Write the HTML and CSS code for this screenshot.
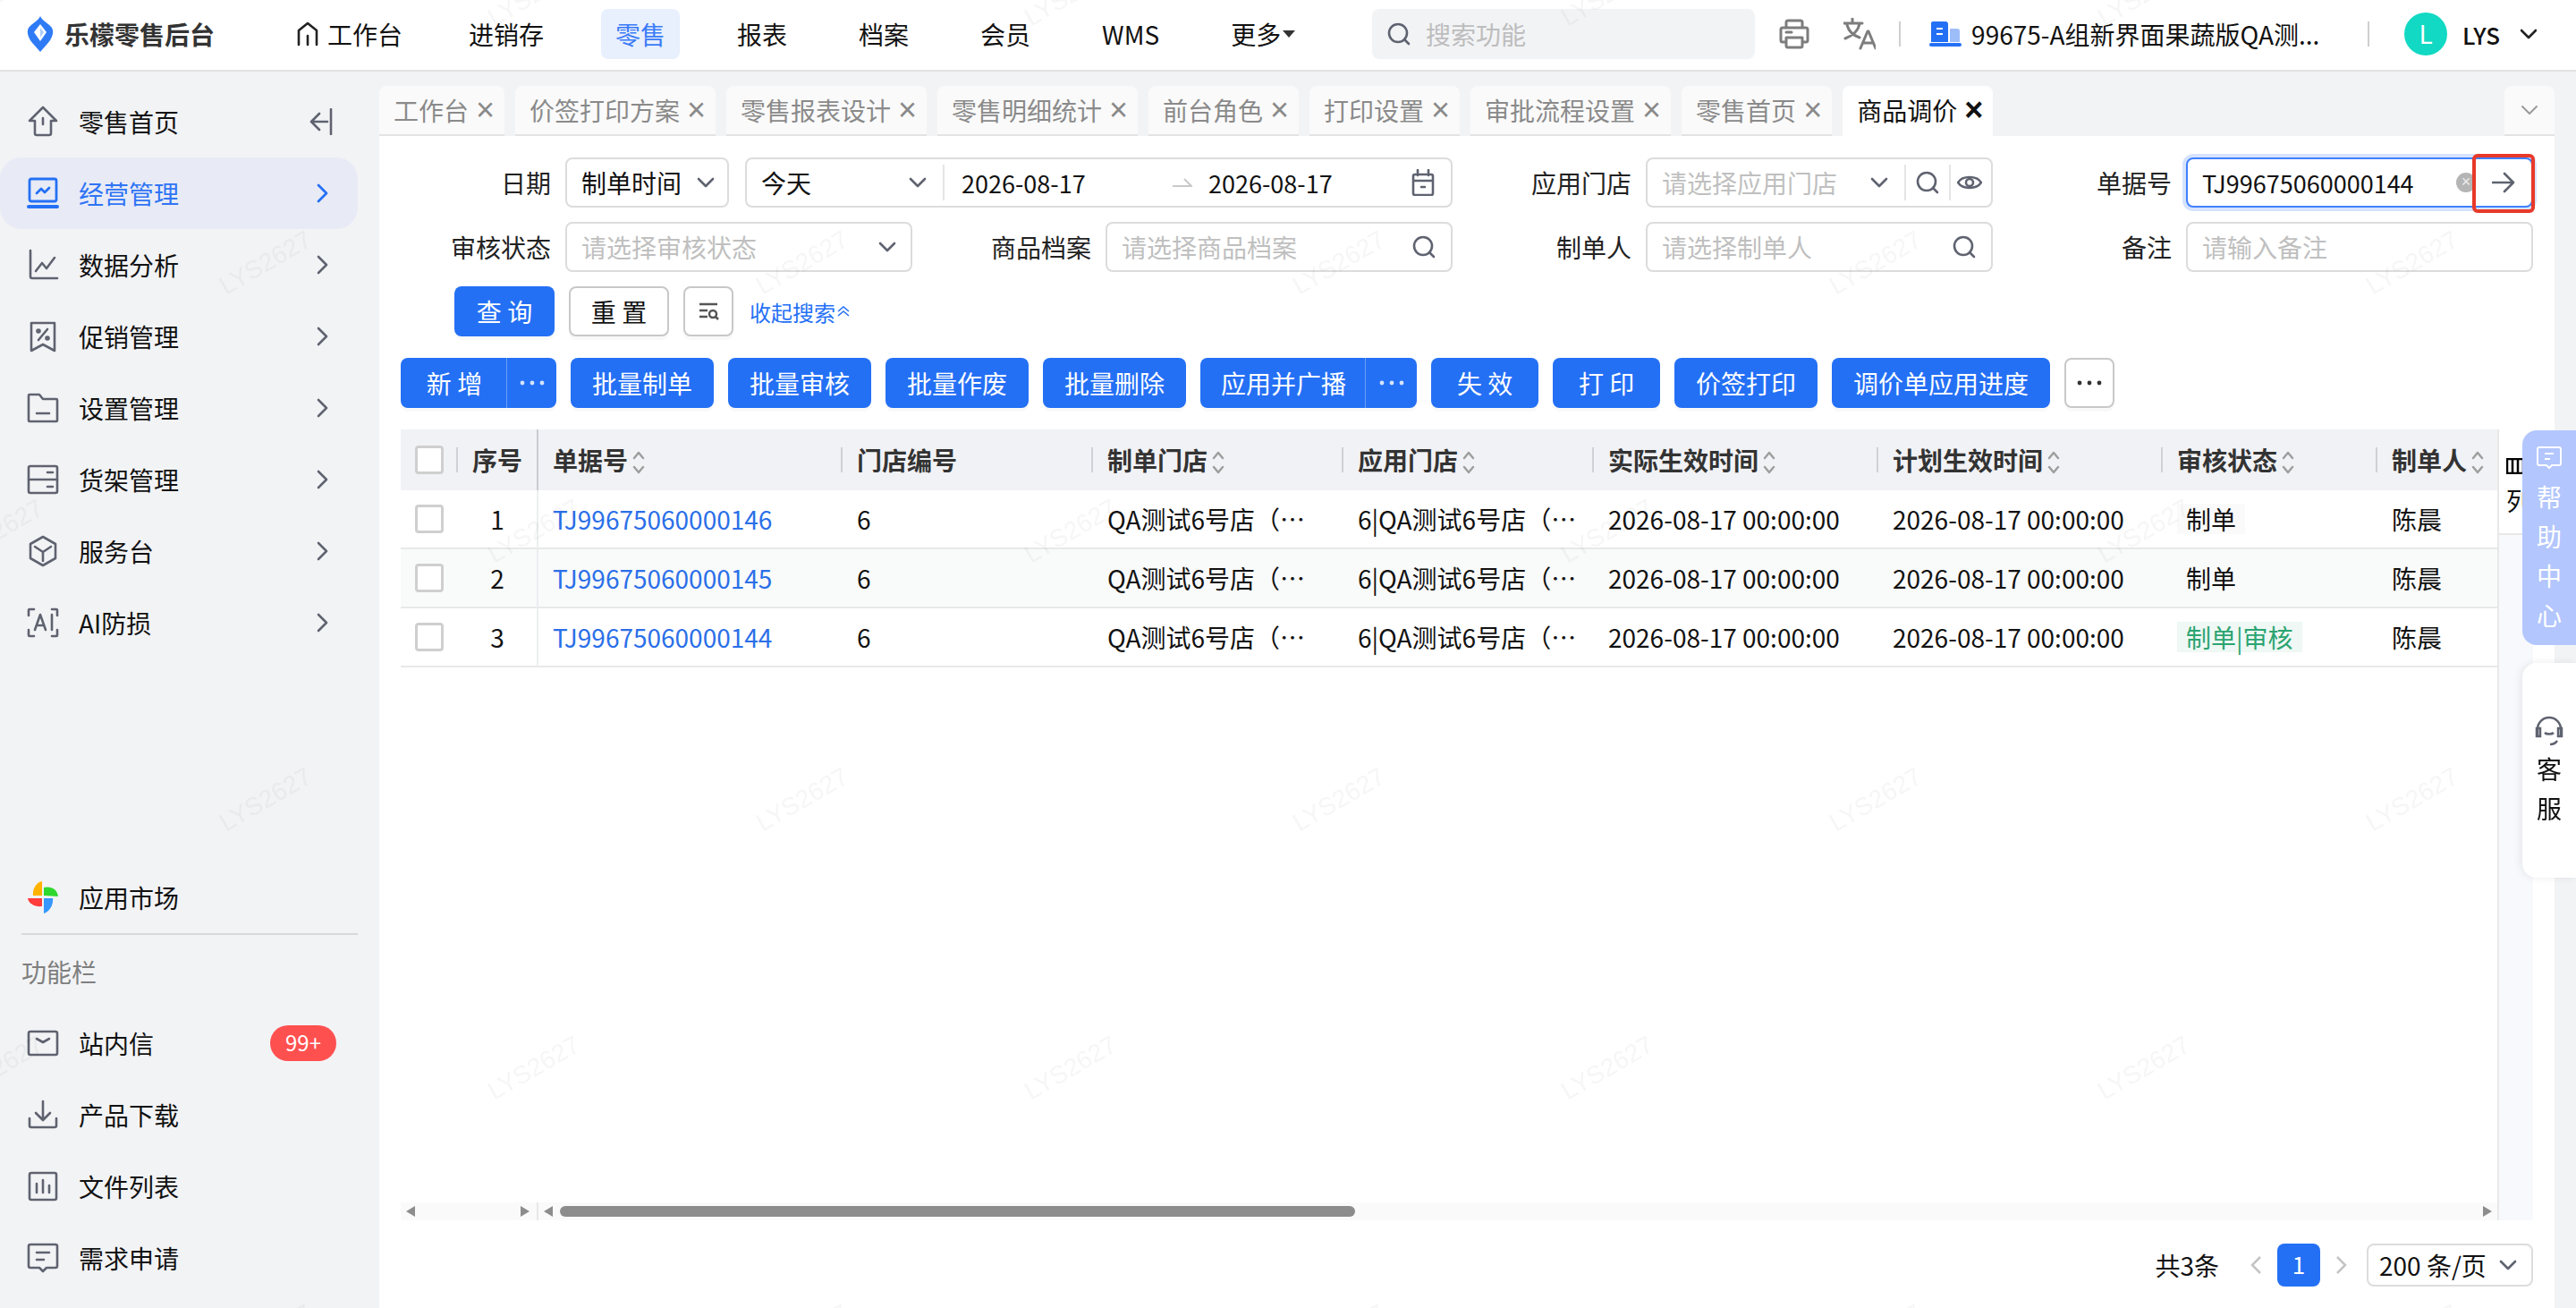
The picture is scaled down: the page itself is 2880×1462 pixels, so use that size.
FILE: index.html
```html
<!DOCTYPE html>
<html lang="zh">
<head>
<meta charset="utf-8">
<title>商品调价</title>
<link rel="stylesheet" href="styles.css">
</head>
<body>
<div class="app">
  <header class="topbar">
    <svg class="logo" viewBox="0 0 30 40"><path fill="#2f7bf6" d="M15 0C17 5 24 8 28 13 31 18 28 26 22 32L15 40 8 32C2 26-1 18 2 13 6 8 13 5 15 0z"/><path fill="#fff" d="M15 9l7 9-7 10-7-10z"/><path fill="#a9cdff" d="M15 13l4 5-4 6z"/></svg>
    <span class="brand">乐檬零售后台</span>
    <nav class="nav">
      <a class="nav-item nav-first"><svg class="nav-home" viewBox="0 0 24 28"><path d="M2 26V10L12 2l10 8v16M12 16v10" class="st-dark"/></svg>工作台</a>
      <a class="nav-item">进销存</a>
      <a class="nav-item nav-active">零售</a>
      <a class="nav-item">报表</a>
      <a class="nav-item">档案</a>
      <a class="nav-item">会员</a>
      <a class="nav-item">WMS</a>
      <a class="nav-item">更多<i class="tri-down"></i></a>
    </nav>
    <div class="top-right">
      <div class="top-search"><svg class="ic28" viewBox="0 0 28 28"><circle cx="13" cy="13" r="10" class="st"/><path d="M20 20l5 5" class="st"/></svg><span>搜索功能</span></div>
      <svg class="ic-print" viewBox="0 0 36 36"><path class="st-grey" d="M9 11V5a2 2 0 0 1 2-2h14a2 2 0 0 1 2 2v6M9 27H5a2 2 0 0 1-2-2V13a2 2 0 0 1 2-2h26a2 2 0 0 1 2 2v12a2 2 0 0 1-2 2h-4M9 22h18v9a2 2 0 0 1-2 2H11a2 2 0 0 1-2-2zM9 16h6"/></svg>
      <svg class="ic-trans" viewBox="0 0 36 36"><path class="st-grey" d="M0 6h21M10 1v5M18 6c-1 8-8 14-16 17M4 8c2 7 8 12 14 14M19 34l8-19h1l8 19M22 28h11"/></svg>
      <i class="vbar vbar-a"></i>
      <svg class="ic-org" viewBox="0 0 36 28"><path fill="#2470f5" d="M2 2a2 2 0 0 1 2-2h14a3 3 0 0 1 3 3v20H2z"/><path fill="#9dbdf8" d="M23 8h8a3 3 0 0 1 3 3v12H23z"/><rect x="0" y="24" width="36" height="4" rx="2" fill="#2470f5"/><path d="M8 8h7M8 14h7" stroke="#fff" stroke-width="2" fill="none"/></svg>
      <span class="org-name">99675-A组新界面果蔬版QA测...</span>
      <i class="vbar vbar-b"></i>
      <span class="avatar">L</span>
      <span class="user">LYS</span>
      <svg class="ic-userchev" viewBox="0 0 18 12"><path d="M1 2l8 8 8-8" class="st-dark"/></svg>
    </div>
  </header>

  <div class="body">
    <aside class="side">
      <a class="side-item"><svg class="side-ic" viewBox="0 0 36 36"><path class="st" d="M3 17L18 2l15 15h-6v14a2 2 0 0 1-2 2H11a2 2 0 0 1-2-2V17zM18 14v7"/></svg><span>零售首页</span><svg class="collapse" viewBox="0 0 26 30"><path class="st" d="M24 1v28M20 15H3M11 6l-9 9 9 9"/></svg></a>
      <a class="side-item side-active"><svg class="side-ic" viewBox="0 0 36 36"><path class="st-blue" d="M3 4a2 2 0 0 1 2-2h26a2 2 0 0 1 2 2v21a2 2 0 0 1-2 2H5a2 2 0 0 1-2-2z"/><path class="st-blue" d="M11 18l5-5 4 4 5-5"/><path d="M2 33h32" stroke="#2470f5" stroke-width="4" stroke-linecap="round"/></svg><span>经营管理</span><svg class="chev" viewBox="0 0 14 22"><path class="st-blue" d="M2 2l9 9-9 9"/></svg></a>
      <a class="side-item"><svg class="side-ic" viewBox="0 0 36 36"><path class="st" d="M4 2v29a2 2 0 0 0 2 2h28M10 25l7-9 5 6 9-12"/></svg><span>数据分析</span><svg class="chev" viewBox="0 0 14 22"><path class="st" d="M2 2l9 9-9 9"/></svg></a>
      <a class="side-item"><svg class="side-ic" viewBox="0 0 36 36"><path class="st" d="M5 3h26v31l-13-7-13 7zM23 10L13 22"/><circle cx="13" cy="12" r="1.500" class="st"/><circle cx="23" cy="20" r="1.500" class="st"/></svg><span>促销管理</span><svg class="chev" viewBox="0 0 14 22"><path class="st" d="M2 2l9 9-9 9"/></svg></a>
      <a class="side-item"><svg class="side-ic" viewBox="0 0 36 36"><path class="st" d="M2 4a1 1 0 0 1 1-1h11l4 5h15a1 1 0 0 1 1 1v23a1 1 0 0 1-1 1H3a1 1 0 0 1-1-1zM11 24h14"/></svg><span>设置管理</span><svg class="chev" viewBox="0 0 14 22"><path class="st" d="M2 2l9 9-9 9"/></svg></a>
      <a class="side-item"><svg class="side-ic" viewBox="0 0 36 36"><rect x="2" y="3" width="32" height="30" rx="2" class="st"/><path class="st" d="M2 18h32M23 10h6M23 26h6"/></svg><span>货架管理</span><svg class="chev" viewBox="0 0 14 22"><path class="st" d="M2 2l9 9-9 9"/></svg></a>
      <a class="side-item"><svg class="side-ic" viewBox="0 0 36 36"><path class="st" d="M18 2l14 8v16l-14 8-14-8V10zM9 13l9 6 9-6M18 19v10"/></svg><span>服务台</span><svg class="chev" viewBox="0 0 14 22"><path class="st" d="M2 2l9 9-9 9"/></svg></a>
      <a class="side-item"><svg class="side-ic" viewBox="0 0 36 36"><path class="st" d="M2 10V4a1 1 0 0 1 1-1h5M28 3h5a1 1 0 0 1 1 1v6M2 26v6a1 1 0 0 0 1 1h5M34 26v6a1 1 0 0 1-1 1h-5M9 26l6-17 6 17M11 21h8M28 9v17"/></svg><span>AI防损</span><svg class="chev" viewBox="0 0 14 22"><path class="st" d="M2 2l9 9-9 9"/></svg></a>

      <a class="side-item side-market"><svg class="side-ic" viewBox="0 0 36 36"><path fill="#ffb300" d="M17 16H7C6 8 11 1 17 0z"/><path fill="#2fd82f" d="M19 16V7c8-2 15 2 16 10z"/><path fill="#ff3d3d" d="M17 19v9C9 29 2 25 1 19z"/><path fill="#3597ff" d="M19 19h10c1 8-4 15-10 17z"/></svg><span>应用市场</span></a>
      <div class="side-rule"></div>
      <div class="side-title">功能栏</div>
      <a class="side-item"><svg class="side-ic" viewBox="0 0 36 36"><rect x="2" y="5" width="32" height="26" rx="2" class="st"/><path class="st" d="M11 13l7 4 7-4"/></svg><span>站内信</span><b class="badge">99+</b></a>
      <a class="side-item"><svg class="side-ic" viewBox="0 0 36 36"><path class="st" d="M3 22v8a2 2 0 0 0 2 2h26a2 2 0 0 0 2-2v-8M18 3v20M10 16l8 8 8-8"/></svg><span>产品下载</span></a>
      <a class="side-item"><svg class="side-ic" viewBox="0 0 36 36"><rect x="3" y="3" width="30" height="30" rx="2" class="st"/><path class="st" d="M11 15v10M18 11v14M25 17v8"/></svg><span>文件列表</span></a>
      <a class="side-item"><svg class="side-ic" viewBox="0 0 36 36"><path class="st" d="M2 5a2 2 0 0 1 2-2h28a2 2 0 0 1 2 2v22a2 2 0 0 1-2 2h-10l-4 4-4-4H4a2 2 0 0 1-2-2zM11 12h14M11 20h8"/></svg><span>需求申请</span></a>
    </aside>

    <main class="main">
      <div class="tabs">
        <a class="tab">工作台<i class="x">×</i></a>
        <a class="tab">价签打印方案<i class="x">×</i></a>
        <a class="tab">零售报表设计<i class="x">×</i></a>
        <a class="tab">零售明细统计<i class="x">×</i></a>
        <a class="tab">前台角色<i class="x">×</i></a>
        <a class="tab">打印设置<i class="x">×</i></a>
        <a class="tab">审批流程设置<i class="x">×</i></a>
        <a class="tab">零售首页<i class="x">×</i></a>
        <a class="tab tab-active">商品调价<i class="x">×</i></a>
        <a class="tab tab-more"><svg class="sel-chev" viewBox="0 0 20 12"><path class="st-light" d="M2 2l8 8 8-8"/></svg></a>
      </div>

      <section class="panel">
        <div class="form">
          <div class="field field-wide">
            <label class="lbl">日期</label>
            <div class="ctl ctl-type"><span>制单时间</span><svg class="sel-chev" viewBox="0 0 20 12"><path class="st" d="M2 2l8 8 8-8"/></svg></div>
            <div class="ctl ctl-range">
              <div class="range-sel"><span>今天</span><svg class="sel-chev" viewBox="0 0 20 12"><path class="st" d="M2 2l8 8 8-8"/></svg></div>
              <span class="range-a">2026-08-17</span>
              <svg class="range-arrow" viewBox="0 0 22 12"><path d="M0 10h21l-8-8" stroke="#c9c9c9" stroke-width="2" fill="none"/></svg>
              <span class="range-b">2026-08-17</span>
              <svg class="ic-cal" viewBox="0 0 26 30"><path class="st" d="M2 8a2 2 0 0 1 2-2h18a2 2 0 0 1 2 2v19a2 2 0 0 1-2 2H4a2 2 0 0 1-2-2zM7 1v6M19 1v6M2 13h22M11 20h4"/></svg>
            </div>
          </div>
          <div class="field">
            <label class="lbl">应用门店</label>
            <div class="ctl ctl-store">
              <span class="ph">请选择应用门店</span>
              <svg class="sel-chev store-chev" viewBox="0 0 20 12"><path class="st" d="M2 2l8 8 8-8"/></svg>
              <i class="ctl-div"></i>
              <svg class="ic-search" viewBox="0 0 28 28"><circle cx="13" cy="13" r="10" class="st"/><path d="M20 20l5 5" class="st"/></svg>
              <i class="ctl-div"></i>
              <svg class="ic-eye" viewBox="0 0 28 28"><path class="st" d="M1 14c5-8 21-8 26 0-5 8-21 8-26 0z"/><circle cx="14" cy="14" r="4" class="st"/></svg>
            </div>
          </div>
          <div class="field field-focus">
            <label class="lbl">单据号</label>
            <div class="ctl ctl-focus">
              <span>TJ99675060000144</span>
              <i class="clear">×</i>
              <svg class="ic-arrow" viewBox="0 0 26 24"><path class="st" d="M1 12h23M14 2l10 10-10 10"/></svg>
            </div>
            <i class="redbox"></i>
          </div>

          <div class="field">
            <label class="lbl">审核状态</label>
            <div class="ctl ctl-grow"><span class="ph">请选择审核状态</span><svg class="sel-chev" viewBox="0 0 20 12"><path class="st" d="M2 2l8 8 8-8"/></svg></div>
          </div>
          <div class="field">
            <label class="lbl">商品档案</label>
            <div class="ctl ctl-grow"><span class="ph">请选择商品档案</span><svg class="ic-search" viewBox="0 0 28 28"><circle cx="13" cy="13" r="10" class="st"/><path d="M20 20l5 5" class="st"/></svg></div>
          </div>
          <div class="field">
            <label class="lbl">制单人</label>
            <div class="ctl ctl-grow"><span class="ph">请选择制单人</span><svg class="ic-search" viewBox="0 0 28 28"><circle cx="13" cy="13" r="10" class="st"/><path d="M20 20l5 5" class="st"/></svg></div>
          </div>
          <div class="field">
            <label class="lbl">备注</label>
            <div class="ctl ctl-grow"><span class="ph">请输入备注</span></div>
          </div>
        </div>

        <div class="query">
          <a class="btn btn-q">查 询</a>
          <a class="btn btn-line">重 置</a>
          <a class="btn btn-line btn-ic"><svg viewBox="0 0 24 24"><path d="M2 4h20M2 11h9M2 18h9" stroke="#555" stroke-width="2.500" fill="none"/><circle cx="17" cy="15" r="4" stroke="#555" stroke-width="2.500" fill="none"/><path d="M20 18l3 3" stroke="#555" stroke-width="2.500"/></svg></a>
          <a class="fold">收起搜索<svg viewBox="0 0 14 12"><path d="M1 6l6-5 6 5M1 11l6-5 6 5" stroke="#2470f5" stroke-width="1.600" fill="none"/></svg></a>
        </div>

        <div class="actions">
          <div class="split"><a class="btn sp-a">新 增</a><a class="btn sp-b"><svg class="dots" viewBox="0 0 28 6"><circle cx="3" cy="3" r="2.400"/><circle cx="14" cy="3" r="2.400"/><circle cx="25" cy="3" r="2.400"/></svg></a></div>
          <a class="btn">批量制单</a>
          <a class="btn">批量审核</a>
          <a class="btn">批量作废</a>
          <a class="btn">批量删除</a>
          <div class="split"><a class="btn sp-c">应用并广播</a><a class="btn sp-b"><svg class="dots" viewBox="0 0 28 6"><circle cx="3" cy="3" r="2.400"/><circle cx="14" cy="3" r="2.400"/><circle cx="25" cy="3" r="2.400"/></svg></a></div>
          <a class="btn btn-2">失 效</a>
          <a class="btn btn-2">打 印</a>
          <a class="btn">价签打印</a>
          <a class="btn">调价单应用进度</a>
          <a class="btn btn-line btn-dots"><svg class="dots" viewBox="0 0 28 6"><circle cx="3" cy="3" r="2.400"/><circle cx="14" cy="3" r="2.400"/><circle cx="25" cy="3" r="2.400"/></svg></a>
        </div>

        <div class="tbl-wrap">
          <div class="tbl-col">
            <table class="tbl">
              <colgroup><col class="c-chk"><col class="c-seq"><col class="c-no"><col class="c-std"><col class="c-std"><col class="c-std"><col class="c-time"><col class="c-time"><col class="c-status"><col class="c-user"></colgroup>
              <thead>
                <tr>
                  <th class="t-chk"><i class="chk"></i></th>
                  <th class="t-seq">序号</th>
                  <th class="sep">单据号<svg class="sort" viewBox="0 0 14 28"><path d="M2 9l5-6 5 6M2 19l5 6 5-6" class="st-sort"/></svg></th>
                  <th class="sep">门店编号</th>
                  <th class="sep">制单门店<svg class="sort" viewBox="0 0 14 28"><path d="M2 9l5-6 5 6M2 19l5 6 5-6" class="st-sort"/></svg></th>
                  <th class="sep">应用门店<svg class="sort" viewBox="0 0 14 28"><path d="M2 9l5-6 5 6M2 19l5 6 5-6" class="st-sort"/></svg></th>
                  <th class="sep">实际生效时间<svg class="sort" viewBox="0 0 14 28"><path d="M2 9l5-6 5 6M2 19l5 6 5-6" class="st-sort"/></svg></th>
                  <th class="sep">计划生效时间<svg class="sort" viewBox="0 0 14 28"><path d="M2 9l5-6 5 6M2 19l5 6 5-6" class="st-sort"/></svg></th>
                  <th class="sep">审核状态<svg class="sort" viewBox="0 0 14 28"><path d="M2 9l5-6 5 6M2 19l5 6 5-6" class="st-sort"/></svg></th>
                  <th>制单人<svg class="sort" viewBox="0 0 14 28"><path d="M2 9l5-6 5 6M2 19l5 6 5-6" class="st-sort"/></svg></th>
                </tr>
              </thead>
              <tbody>
                <tr>
                  <td class="t-chk"><i class="chk"></i></td><td class="t-seq">1</td>
                  <td><a class="link">TJ99675060000146</a></td><td>6</td><td>QA测试6号店（…</td><td>6|QA测试6号店（…</td>
                  <td>2026-08-17 00:00:00</td><td>2026-08-17 00:00:00</td>
                  <td><span class="tag">制单</span></td><td>陈晨</td>
                </tr>
                <tr class="alt">
                  <td class="t-chk"><i class="chk"></i></td><td class="t-seq">2</td>
                  <td><a class="link">TJ99675060000145</a></td><td>6</td><td>QA测试6号店（…</td><td>6|QA测试6号店（…</td>
                  <td>2026-08-17 00:00:00</td><td>2026-08-17 00:00:00</td>
                  <td><span class="tag">制单</span></td><td>陈晨</td>
                </tr>
                <tr>
                  <td class="t-chk"><i class="chk"></i></td><td class="t-seq">3</td>
                  <td><a class="link">TJ99675060000144</a></td><td>6</td><td>QA测试6号店（…</td><td>6|QA测试6号店（…</td>
                  <td>2026-08-17 00:00:00</td><td>2026-08-17 00:00:00</td>
                  <td><span class="tag tag-green">制单|审核</span></td><td>陈晨</td>
                </tr>
              </tbody>
            </table>
            <div class="scroll">
              <div class="scroll-fixed"><i class="ar-l"></i><i class="ar-r"></i></div>
              <div class="scroll-main"><i class="ar-l"></i><i class="thumb"></i><i class="ar-r ar-end"></i></div>
            </div>
          </div>
          <div class="col-set">
            <div class="col-set-head"><svg viewBox="0 0 20 18"><path d="M1 1h18v16H1zM7 1v16M13 1v16" stroke="#000" stroke-width="2.500" fill="none"/></svg><span>列</span></div>
          </div>
        </div>

        <div class="pager">
          <span class="total">共3条</span>
          <svg class="pg-chev pg-prev" viewBox="0 0 14 22"><path d="M12 2l-9 9 9 9" stroke="#c4c4c4" stroke-width="2.500" fill="none"/></svg>
          <a class="pg-cur">1</a>
          <svg class="pg-chev pg-next" viewBox="0 0 14 22"><path d="M2 2l9 9-9 9" stroke="#c4c4c4" stroke-width="2.500" fill="none"/></svg>
          <div class="pg-size"><span>200 条/页</span><svg class="sel-chev" viewBox="0 0 20 12"><path class="st" d="M2 2l8 8 8-8"/></svg></div>
        </div>
      </section>
    </main>
  </div>
</div>

<aside class="float-help">
  <svg viewBox="0 0 30 26"><path d="M2 3a2 2 0 0 1 2-2h22a2 2 0 0 1 2 2v16a2 2 0 0 1-2 2h-8l-3 3-3-3H4a2 2 0 0 1-2-2zM10 8h10M10 14h6" stroke="#fff" stroke-width="2" fill="none"/></svg>
  <span>帮</span><span>助</span><span>中</span><span>心</span>
</aside>
<aside class="float-cs">
  <svg viewBox="0 0 32 34"><path d="M3 22V15a13 13 0 0 1 26 0v7M25 28c-2 3-5 4-8 4M2 14h4v9H2zM26 14h4v9h-4zM11 19c2 2 8 2 10 0" stroke="#5f6370" stroke-width="2.500" fill="none"/></svg>
  <span>客</span><span>服</span>
</aside>

<svg class="watermark" width="2880" height="1462" aria-hidden="true">
  <defs>
    <pattern id="wm" x="147" y="144" width="600" height="600" patternUnits="userSpaceOnUse">
      <text x="150" y="159" text-anchor="middle" transform="rotate(-30 150 150)" class="wm-text">LYS2627</text>
      <text x="450" y="459" text-anchor="middle" transform="rotate(-30 450 450)" class="wm-text">LYS2627</text>
    </pattern>
  </defs>
  <rect width="2880" height="1462" fill="url(#wm)"/>
</svg>
</body>
</html>
```

FILE: styles.css
```css
* { box-sizing: border-box; }
html, body { margin: 0; height: 100%; overflow: hidden; }
body {
  font-family: "Noto Sans CJK SC", "Noto Sans", sans-serif;
  font-size: 28px;
  color: #111;
  background: #f2f3f5;
}
i { font-style: normal; }
a { color: inherit; text-decoration: none; }

.st, .st-dark, .st-blue, .st-grey, .st-light, .st-sort { fill: none; stroke-linecap: round; stroke-linejoin: round; }
.st { stroke: #5f6370; stroke-width: 2.6; }
.st-dark { stroke: #222; stroke-width: 2.6; }
.st-blue { stroke: #2470f5; stroke-width: 2.8; }
.st-grey { stroke: #7d7d7d; stroke-width: 3; }
.st-light { stroke: #9a9a9a; stroke-width: 2; }
.st-sort { stroke: #9d9d9d; stroke-width: 2.4; }

.app { display: flex; flex-direction: column; height: 1462px; }

/* top bar */
.topbar {
  height: 80px; flex: none;
  display: flex; align-items: center;
  padding: 0 44px 2px 30px;
  background: #fff;
  border-bottom: 2px solid #e2e2e2;
}
.logo { width: 30px; height: 40px; flex: none; }
.brand { margin-left: 12px; font-weight: 700; color: #333; white-space: nowrap; }
.nav { display: flex; align-items: center; gap: 48px; margin-left: 76px; }
.nav-item { height: 56px; padding: 0 16px; display: flex; align-items: center; border-radius: 8px; white-space: nowrap; color: #111; }
.nav-first { margin-right: -6px; }
.nav-home { width: 24px; height: 28px; margin-right: 10px; }
.nav-active { background: #e8effd; color: #3a7bf7; }
.tri-down { width: 0; height: 0; margin-left: 2px; border: 7px solid transparent; border-top: 8px solid #333; border-bottom: 0; }
.top-right { margin-left: auto; display: flex; align-items: center; }
.top-search { width: 428px; height: 56px; border-radius: 8px; background: #f2f3f5; display: flex; align-items: center; padding-left: 16px; color: #bdbdbd; gap: 16px; }
.ic28 { width: 28px; height: 28px; }
.ic-print { width: 36px; height: 36px; margin-left: 26px; }
.ic-trans { width: 36px; height: 36px; margin-left: 37px; }
.vbar { width: 2px; height: 28px; background: #cfcfcf; }
.vbar-a { margin-left: 26px; }
.ic-org { width: 36px; height: 28px; margin-left: 32px; }
.org-name { width: 387px; margin-left: 11px; white-space: nowrap; }
.vbar-b { margin-left: 56px; }
.avatar { width: 48px; height: 48px; margin-left: 39px; border-radius: 50%; background: #12d9c3; color: #fff; text-align: center; line-height: 46px; }
.user { margin-left: 17px; font-size: 26px; font-weight: 500; }
.ic-userchev { width: 18px; height: 12px; margin-left: 23px; }

/* body */
.body { flex: 1; display: flex; min-height: 0; }
.side { width: 424px; flex: none; display: flex; flex-direction: column; padding: 16px 0 16px; }
.side-item { height: 80px; flex: none; width: 400px; display: flex; align-items: center; padding: 0 32px 0 30px; border-radius: 24px; }
.side-item > span { margin-left: 22px; white-space: nowrap; }
.side-ic { width: 36px; height: 36px; flex: none; }
.chev { width: 14px; height: 22px; margin-left: auto; }
.collapse { width: 26px; height: 30px; margin-left: auto; margin-right: -4px; }
.side-active { background: #e8ebf5; color: #2f74f5; }
.side-market { margin-top: auto; }
.side-rule { height: 2px; width: 376px; margin-left: 24px; background: #d9d9d9; flex: none; }
.side-title { height: 81px; flex: none; display: flex; align-items: center; padding-left: 24px; color: #7f7f7f; }
.badge { margin-left: auto; margin-right: -8px; width: 74px; height: 40px; border-radius: 20px; background: #ff5050; color: #fff; font-size: 24px; font-weight: 400; text-align: center; line-height: 38px; }

/* main */
.main { flex: 1; min-width: 0; display: flex; flex-direction: column; padding: 16px 24px 0 0; }
.tabs { display: flex; gap: 12px; height: 56px; flex: none; }
.tab { height: 56px; padding: 0 14px 0 16px; display: flex; align-items: center; background: #fafafa; border-bottom: 2px solid #e3e3e3; border-radius: 8px 8px 0 0; color: #8a8a8a; white-space: nowrap; }
.x { width: 16px; margin-left: 8px; margin-right: 2px; font-size: 36px; line-height: 28px; text-align: center; font-family: "Liberation Sans", sans-serif; }
.tab-active { background: #fff; border-bottom-color: #fff; color: #111; }
.tab-active .x { color: #111; font-weight: 700; }
.tab-more { margin-left: auto; width: 56px; padding: 0; justify-content: center; }

.panel { flex: 1; min-height: 0; background: #fff; padding: 24px 24px 0; display: flex; flex-direction: column; }

.form { display: grid; grid-template-columns: repeat(4, 572px); column-gap: 32px; row-gap: 16px; }
.field { display: flex; align-items: center; position: relative; }
.field-wide { grid-column: span 2; }
.lbl { width: 168px; margin-right: 16px; flex: none; text-align: right; white-space: nowrap; color: #222; }
.ctl { height: 56px; display: flex; align-items: center; border: 2px solid #dcdcdc; border-radius: 8px; padding: 0 16px; white-space: nowrap; background: #fff; }
.ctl-grow { flex: 1; justify-content: space-between; }
.ph { color: #bfbfbf; }
.sel-chev { width: 20px; height: 12px; flex: none; }
.ctl-type { width: 183px; justify-content: space-between; padding-right: 14px; }
.ctl-range { width: 791px; margin-left: 18px; }
.range-sel { width: 205px; flex: none; display: flex; align-items: center; justify-content: space-between; height: 40px; padding-right: 18px; border-right: 2px solid #e5e5e5; }
.range-a { margin-left: 19px; width: 236px; font-size: 27px; flex: none; }
.range-arrow { width: 22px; height: 12px; flex: none; }
.range-b { margin-left: 18px; font-size: 27px; }
.ic-cal { width: 26px; height: 30px; margin-left: auto; margin-right: 2px; }
.ctl-store { flex: 1; padding-right: 10px; }
.store-chev { margin-left: auto; }
.ctl-div { width: 2px; height: 40px; background: #e5e5e5; margin: 0 10px 0 18px; flex: none; }
.ctl-store .ic-search + .ctl-div { margin: 0 7px 0 10px; }
.ic-search { width: 28px; height: 28px; flex: none; }
.ic-eye { width: 28px; height: 28px; flex: none; }
.ctl-focus { flex: 1; position: relative; border-color: #4080ff; box-shadow: 0 0 0 4px #d6e3ff; justify-content: flex-start; font-size: 27px; }
.clear { width: 22px; height: 22px; margin-left: auto; margin-right: 18px; border-radius: 50%; background: #b5b5b5; color: #eee; font-size: 18px; line-height: 20px; text-align: center; font-family: "Liberation Sans", sans-serif; }
.ic-arrow { width: 26px; height: 24px; flex: none; margin-right: 2px; }
.redbox { position: absolute; right: -2px; top: -4px; width: 70px; height: 66px; border: 4px solid #e8392a; border-radius: 6px; }

.btn { height: 56px; padding: 0 24px; flex: none; display: inline-flex; align-items: center; justify-content: center; border-radius: 8px; background: #2470f5; color: #fff; white-space: nowrap; box-shadow: 0 4px 0 rgba(0, 0, 0, .025); }
.btn-line { background: #fff; color: #111; border: 2px solid #c8c8c8; }
.query { display: flex; align-items: center; height: 56px; margin-top: 16px; padding-left: 60px; gap: 16px; flex: none; }
.btn-q, .query .btn-line { width: 112px; padding: 0; }
.query .btn-ic { width: 56px; }
.btn-ic svg { width: 24px; height: 24px; }
.fold { margin-left: 2px; color: #2470f5; font-size: 24px; display: flex; align-items: center; gap: 2px; }
.fold svg { width: 14px; height: 12px; }

.actions { display: flex; gap: 16px; height: 56px; margin-top: 24px; flex: none; }
.split { display: flex; flex: none; }
.split .btn { padding: 0; }
.split .sp-a { width: 119px; padding-left: 2px; border-radius: 8px 0 0 8px; border-right: 1px solid #6b9ff8; }
.sp-b { width: 55px; border-radius: 0 8px 8px 0; }
.split .sp-c { width: 185px; padding-left: 2px; border-radius: 8px 0 0 8px; border-right: 1px solid #6b9ff8; }
.sp-c + .sp-b { width: 57px; }
.btn-2 { width: 120px; padding: 0; }
.btn-dots { width: 56px; padding: 0; }
.dots { width: 28px; height: 6px; fill: #d5e3fd; }
.btn-dots .dots { fill: #333; }

.tbl-wrap { display: flex; height: 884px; margin-top: 24px; flex: none; }
.tbl-col { width: 2344px; flex: none; display: flex; flex-direction: column; }
.tbl { width: 2344px; table-layout: fixed; border-collapse: separate; border-spacing: 0; }
.c-chk { width: 64px; }
.c-seq { width: 90px; }
.c-no { width: 340px; }
.c-std { width: 280px; }
.c-time { width: 318px; }
.c-status { width: 240px; }
.c-user { width: 134px; }
.tbl th { height: 68px; padding: 0 0 0 16px; background: #f1f2f5; text-align: left; font-weight: 600; color: #333; white-space: nowrap; }
.tbl th.sep { background: #f1f2f5 linear-gradient(#cfd1d6, #cfd1d6) no-repeat right center / 2px 28px; }
.tbl td { height: 66px; padding: 0 0 0 16px; border-bottom: 2px solid #e8e8e8; white-space: nowrap; overflow: hidden; }
.alt td { background: #f9fafa; }
.tbl .t-chk { padding: 0 0 0 16px; }
.tbl .t-seq { padding: 0; text-align: center; border-right: 2px solid #eceef0; }
.tbl th.t-seq { border-right-color: #c9ccd2; }
.tbl th.t-chk { background: #f1f2f5 linear-gradient(#cfd1d6, #cfd1d6) no-repeat right center / 2px 28px; }
.chk { display: block; width: 32px; height: 32px; border: 3px solid #cfcfcf; border-radius: 4px; background: #fff; }
.sort { width: 14px; height: 28px; margin-left: 5px; vertical-align: -5px; }
.link { color: #2b6fe8; }
.tag { display: inline-block; padding: 0 10px; height: 34px; line-height: 34px; background: #fafafa; }
.alt .tag { background: transparent; }
.tag-green { background: #eff8f4; color: #2ba471; }

.scroll { margin-top: auto; height: 20px; flex: none; background: #fafafa; display: flex; }
.scroll-fixed { width: 154px; height: 20px; padding: 0 8px 0 6px; border-right: 2px solid #e8e8e8; display: flex; align-items: center; justify-content: space-between; flex: none; }
.scroll-main { flex: 1; display: flex; align-items: center; padding: 0 6px; }
.ar-l { width: 0; height: 0; border: 6px solid transparent; border-left: 0; border-right: 10px solid #8c8c8c; flex: none; }
.ar-r { width: 0; height: 0; border: 6px solid transparent; border-right: 0; border-left: 10px solid #8c8c8c; flex: none; }
.ar-end { margin-left: auto; }
.thumb { width: 889px; height: 12px; margin-left: 8px; border-radius: 6px; background: #8c8c8c; flex: none; }

.col-set { width: 40px; flex: none; background: #f8f9fc; border-left: 2px solid #e8e8e8; overflow: hidden; }
.col-set-head { height: 118px; padding: 32px 0 0 8px; background: #fff; border-bottom: 2px solid #e8e8e8; display: flex; flex-direction: column; }
.col-set-head svg { width: 20px; height: 18px; flex: none; }
.col-set-head span { margin-top: 13px; line-height: 32px; }

.pager { display: flex; align-items: center; justify-content: flex-end; height: 48px; margin-top: 26px; flex: none; }
.total { margin-right: 34px; }
.pg-chev { width: 14px; height: 22px; }
.pg-cur { width: 48px; height: 48px; margin: 0 17px; border-radius: 8px; background: #2470f5; color: #fff; text-align: center; line-height: 46px; font-size: 26px; }
.pg-size { width: 186px; height: 48px; margin-left: 21px; padding: 0 16px 0 12px; border: 2px solid #dcdcdc; border-radius: 8px; display: flex; align-items: center; justify-content: space-between; white-space: nowrap; }

/* floating side tabs */
.float-help, .float-cs { position: fixed; right: 0; width: 60px; display: flex; flex-direction: column; align-items: center; border-radius: 16px 0 0 16px; }
.float-help { top: 481px; height: 240px; padding-top: 18px; background: #b3c6fd; color: #fff; }
.float-help svg { width: 30px; height: 26px; margin-bottom: 8px; flex: none; }
.float-help span, .float-cs span { height: 44px; line-height: 44px; }
.float-cs { top: 741px; height: 240px; padding-top: 59px; background: #fff; box-shadow: -2px 0 10px rgba(0, 0, 0, .08); }
.float-cs svg { width: 32px; height: 34px; margin-bottom: 3px; flex: none; }

.watermark { position: fixed; left: 0; top: 0; pointer-events: none; }
.wm-text { font-family: "Liberation Sans", sans-serif; font-size: 28px; fill: rgba(0, 0, 0, .035); }
```
